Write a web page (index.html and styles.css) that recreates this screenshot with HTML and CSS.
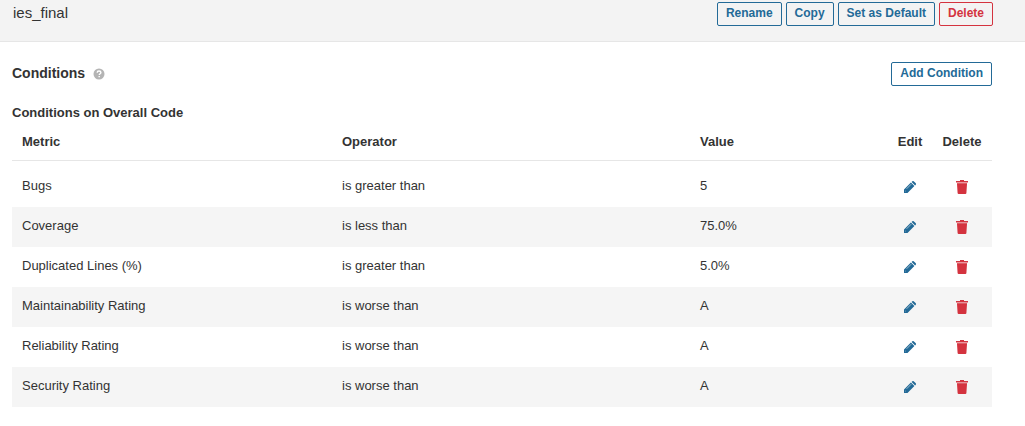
FILE: index.html
```html
<!DOCTYPE html>
<html lang="en">
<head>
<meta charset="utf-8">
<title>Quality Gate</title>
<link rel="stylesheet" href="styles.css">
</head>
<body>
<svg class="sprite" aria-hidden="true">
  <symbol id="pencil" viewBox="0 0 16 16"><path fill="currentColor" d="M2 14v-3.500L8.900 3.600l3.500 3.500L5.500 14zM9.600 2.900l.7-.7q.7-.5 1.400 0l2.100 2.100q.5.700 0 1.400l-.7.700z"/><path fill="none" stroke="#fff" stroke-opacity=".7" stroke-width=".8" d="M4.600 9.800L9.200 5.200"/><path fill="#fff" d="M3 11.500l1.500 1.500H4v-.8h-1z"/></symbol>
  <symbol id="trash" viewBox="0 0 16 16"><path fill="currentColor" d="M2 2h4V1h4v1h4v1H2zM3 5h10l-.6 9q-.1 1-1 1H4.600q-.9 0-1-1z"/><path fill="currentColor" opacity=".5" d="M2 3h12v1H2z"/><path fill="currentColor" opacity=".8" d="M3 4h10v1H3z"/></symbol>
</svg>
<header class="page-header">
  <h1 class="gate-name">ies_final</h1>
  <div class="actions">
    <button class="button" type="button">Rename</button>
    <button class="button" type="button">Copy</button>
    <button class="button" type="button">Set as Default</button>
    <button class="button button-red" type="button">Delete</button>
  </div>
</header>
<main class="content">
  <div class="section-head">
    <h2 class="section-title">Conditions</h2>
    <svg class="help" viewBox="0 0 12 12" role="img" aria-label="Help"><circle cx="6" cy="6" r="5.500" fill="#b4b4b4"/><path d="M4.200 4.700C4.200 3.500 5 3 6 3s1.900.6 1.900 1.500C7.900 5.700 6.200 5.700 6.200 7" fill="none" stroke="#fff" stroke-width="1.400"/><path fill="#fff" d="M5.500 7.900h1.400v1.400H5.500z"/></svg>
    <button class="button add" type="button">Add Condition</button>
  </div>
  <h3 class="subtitle">Conditions on Overall Code</h3>
  <table class="conditions">
    <thead><tr><th class="metric">Metric</th><th class="operator">Operator</th><th class="value">Value</th><th class="edit">Edit</th><th class="delete">Delete</th></tr></thead>
    <tbody>
      <tr><td>Bugs</td><td>is greater than</td><td>5</td><td class="tool"><button class="icon-button" type="button" aria-label="Edit Bugs"><svg class="icon"><use href="#pencil"/></svg></button></td><td class="tool"><button class="icon-button red" type="button" aria-label="Delete Bugs"><svg class="icon"><use href="#trash"/></svg></button></td></tr>
      <tr><td>Coverage</td><td>is less than</td><td>75.0%</td><td class="tool"><button class="icon-button" type="button" aria-label="Edit Coverage"><svg class="icon"><use href="#pencil"/></svg></button></td><td class="tool"><button class="icon-button red" type="button" aria-label="Delete Coverage"><svg class="icon"><use href="#trash"/></svg></button></td></tr>
      <tr><td>Duplicated Lines (%)</td><td>is greater than</td><td>5.0%</td><td class="tool"><button class="icon-button" type="button" aria-label="Edit Duplicated Lines"><svg class="icon"><use href="#pencil"/></svg></button></td><td class="tool"><button class="icon-button red" type="button" aria-label="Delete Duplicated Lines"><svg class="icon"><use href="#trash"/></svg></button></td></tr>
      <tr><td>Maintainability Rating</td><td>is worse than</td><td>A</td><td class="tool"><button class="icon-button" type="button" aria-label="Edit Maintainability Rating"><svg class="icon"><use href="#pencil"/></svg></button></td><td class="tool"><button class="icon-button red" type="button" aria-label="Delete Maintainability Rating"><svg class="icon"><use href="#trash"/></svg></button></td></tr>
      <tr><td>Reliability Rating</td><td>is worse than</td><td>A</td><td class="tool"><button class="icon-button" type="button" aria-label="Edit Reliability Rating"><svg class="icon"><use href="#pencil"/></svg></button></td><td class="tool"><button class="icon-button red" type="button" aria-label="Delete Reliability Rating"><svg class="icon"><use href="#trash"/></svg></button></td></tr>
      <tr><td>Security Rating</td><td>is worse than</td><td>A</td><td class="tool"><button class="icon-button" type="button" aria-label="Edit Security Rating"><svg class="icon"><use href="#pencil"/></svg></button></td><td class="tool"><button class="icon-button red" type="button" aria-label="Delete Security Rating"><svg class="icon"><use href="#trash"/></svg></button></td></tr>
    </tbody>
  </table>
</main>
</body>
</html>
```
FILE: styles.css
```css
* { box-sizing: border-box; }
body {
  margin: 0;
  background: #fff;
  color: #333;
  font: 13px/20px "Liberation Sans", Arial, sans-serif;
}
h1, h2, h3 { margin: 0; }
.sprite { display: none; }
.page-header {
  display: flex;
  justify-content: space-between;
  align-items: flex-start;
  padding: 2px 32px 15px 13px;
  background: #f3f3f3;
  border-bottom: 1px solid #e6e6e6;
}
.gate-name { font-size: 15px; font-weight: 400; line-height: 22px; }
.actions { display: flex; gap: 4px; }
.button {
  height: 24px;
  padding: 0 8px 2px;
  border: 1px solid #236a97;
  border-radius: 2px;
  background: transparent;
  color: #236a97;
  font: bold 12px/20px "Liberation Sans", Arial, sans-serif;
}
.button-red { border-color: #d4333f; color: #d4333f; }
.content { padding: 20px 33px 20px 12px; }
.section-head { display: flex; align-items: center; }
.section-title { padding-bottom: 2px; font-size: 14px; line-height: 22px; }
.help { width: 12px; height: 12px; margin-left: 8px; }
.add { margin-left: auto; }
.subtitle { margin-top: 16px; font-size: 13px; line-height: 22px; }
.conditions {
  width: 100%;
  table-layout: fixed;
  border-collapse: separate;
  border-spacing: 0;
}
.conditions th {
  padding: 8px 10px;
  border-bottom: 1px solid #e6e6e6;
  text-align: left;
}
.metric { width: 320px; }
.operator { width: 358px; }
.edit { width: 44px; }
.delete { width: 60px; }
.conditions tbody::before { content: ""; display: block; height: 6px; }
.conditions td { height: 40px; padding: 8px 10px; line-height: 22px; vertical-align: top; }
.conditions tbody tr:nth-child(even) { background: #f5f5f5; }
.conditions .edit, .conditions .delete, .conditions .tool {
  padding-left: 0;
  padding-right: 0;
  text-align: center;
}
.icon-button {
  display: inline-flex;
  align-items: center;
  justify-content: center;
  width: 24px;
  height: 24px;
  padding: 0;
  border: 0;
  background: none;
  color: #236a97;
  vertical-align: top;
}
.icon-button.red { color: #d4333f; }
.icon { width: 16px; height: 16px; }
```
